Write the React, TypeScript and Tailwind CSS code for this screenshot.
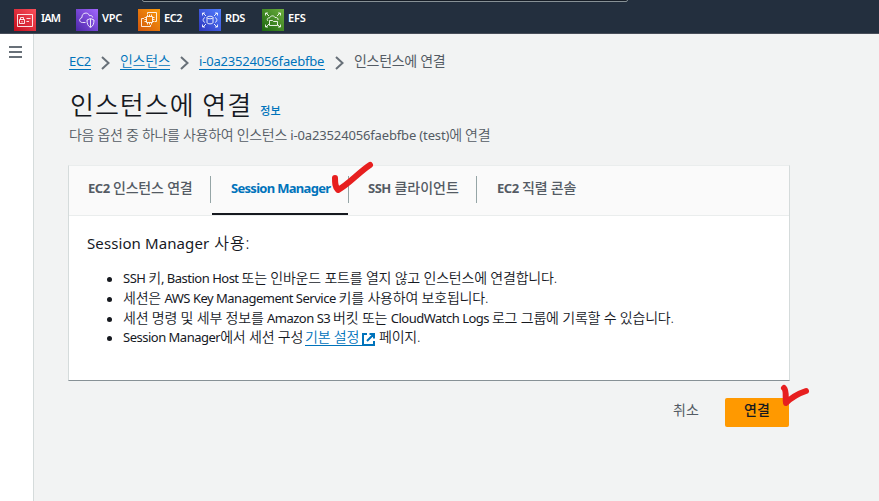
import React from 'react';

const FONT = 'font-["Noto_Sans","Noto_Sans_CJK_KR",sans-serif]';

function En({ className = 'text-[13px] font-normal tracking-[-0.5px]', children }: { className?: string; children: React.ReactNode }) {
  return <span className={className}>{children}</span>;
}

function Chevron() {
  return (
    <svg className="mt-[7px] block h-[14px] w-[9px] shrink-0" viewBox="0 0 9 14" fill="none" stroke="#687078" strokeWidth="2">
      <path d="M1 1l6.5 6L1 13" />
    </svg>
  );
}

function Item({ children }: { children: React.ReactNode }) {
  return (
    <li className="flex h-[20px]">
      <i className="mr-[11px] mt-[8px] h-[5px] w-[5px] rounded-full bg-[#16191f]" />
      <div className="whitespace-pre">{children}</div>
    </li>
  );
}

const corners = 'M3.5 6.500V4H6M4 4l3 3M16 4h2.500v2.500M18 4l-3 3M3.500 15.500V18H6M4 18l3-3M18.500 15.500V18H16M18 18l-3-3';

function ServiceIcon({ name }: { name: string }) {
  return (
    <svg className="block h-[22px] w-[22px] shrink-0" viewBox="0 0 22 22" fill="none" stroke="#fff" strokeWidth="1" strokeOpacity="0.85">
      <defs>
        <linearGradient id={'g' + name} x1="0" y1="1" x2="1" y2="0">
          <stop offset="0" stopColor={{ IAM: '#c40d1d', VPC: '#4d27a8', EC2: '#d2560d', RDS: '#2e36bd', EFS: '#1b660f' }[name]} />
          <stop offset="1" stopColor={{ IAM: '#fa505b', VPC: '#a166ff', EC2: '#fa9a0a', RDS: '#527fff', EFS: '#6cae3e' }[name]} />
        </linearGradient>
      </defs>
      <rect width="22" height="22" fill={`url(#g${name})`} stroke="none" />
      {name === 'IAM' && (
        <g>
          <path d="M3.500 5.500h15v12h-15z" />
          <path d="M5.500 10.500h5v4h-5zM6.500 10.500V8.500h3v2M12.500 9.500h4M12.500 12.500h2.500M8 12v1.500" />
        </g>
      )}
      {name === 'VPC' && (
        <g>
          <path d="M9.500 13.500H6.500C3 13.500 2.700 9.500 6 8.500 5.500 3.500 12 2.500 13.500 6.700c2-.7 3 .5 3.200 1.800" />
          <path d="M14.500 9.500l3.500 1.500c0 4-1 6-3.500 7.500-2.500-1.500-3.500-3.500-3.500-7.500zM14.500 10v8" />
        </g>
      )}
      {name === 'EC2' && (
        <g>
          <path d="M8.500 7.500h6v6h-6zM9.500 7.500v-2M11.500 7.500v-2M13.500 7.500v-2M9.500 13.500v2M11.500 13.500v2M13.500 13.500v2M8.500 8.500h-2M8.500 10.500h-2M8.500 12.500h-2M14.500 8.500h2M14.500 10.500h2M14.500 12.500h2" />
          <path d="M9.500 5V3.500h9v9h-1.500M6 9.500H3.500v8h9V16" />
        </g>
      )}
      {name === 'RDS' && (
        <g>
          <path d={corners} />
          <ellipse cx="11" cy="8.500" rx="3" ry="1.300" />
          <path d="M8 8.500v5c0 1.800 6 1.800 6 0v-5M6 8.500c-2.500 1-2.500 4 0 5M16 8.500c2.500 1 2.500 4 0 5" />
        </g>
      )}
      {name === 'EFS' && (
        <g>
          <path d={corners} />
          <path d="M7.500 16.500v-5h3l1 1h4v4zM6 12c-1.500-1.500-.5-3.500 1.500-3 .8-2.500 4.500-3 5.500-.5 2-.5 3.500 1 3 2.500" />
        </g>
      )}
    </svg>
  );
}

const link = 'border-b border-[#0073bb] text-[#0073bb]';

export default function App() {
  return (
    <div className={`${FONT} flex h-[501px] w-[879px] flex-col overflow-hidden bg-[#f2f3f3] text-[14px] text-[#16191f]`}>
      <header className="relative flex h-[34px] shrink-0 border-b border-[#474d59] bg-[#232f3e] pl-[14px] pt-[9px] text-[11px] font-semibold leading-[18px] text-white">
        <div className="absolute left-[142px] top-[-6px] h-[8px] w-[486px] rounded-[2px] border border-[#879196] bg-[#161d26]" />
        <div className="flex w-[62px] gap-[5px]"><ServiceIcon name="IAM" /><span className="tracking-[-0.8px]">IAM</span></div>
        <div className="flex w-[62px] gap-[4px]"><ServiceIcon name="VPC" /><span className="tracking-[-0.2px]">VPC</span></div>
        <div className="flex w-[61px] gap-[4px]"><ServiceIcon name="EC2" /><span className="tracking-[-0.5px]">EC2</span></div>
        <div className="flex w-[63px] gap-[4px]"><ServiceIcon name="RDS" /><span className="tracking-[-0.4px]">RDS</span></div>
        <div className="flex gap-[4px]"><ServiceIcon name="EFS" /><span className="tracking-[-0.2px]">EFS</span></div>
      </header>
      <div className="flex min-h-0 flex-1">
        <aside className="w-[34px] shrink-0 border-r border-[#d5dbdb] bg-white pl-[9px] pt-[12px]">
          <div className="flex w-[13px] flex-col gap-[3px]">
            <i className="h-[2px] bg-[#687078]" /><i className="h-[2px] bg-[#687078]" /><i className="h-[2px] bg-[#687078]" />
          </div>
        </aside>
        <main className="flex flex-1 flex-col whitespace-nowrap pl-[34px]">
          <nav className="flex h-[36px] pl-[1px] pt-[15px] leading-[23px]">
            <a className={`${link} mr-[10px] h-[21px] w-[22px]`}><En className="text-[13px] tracking-[-0.3px]">EC2</En></a>
            <Chevron />
            <a className={`${link} ml-[10px] mr-[10px] h-[21px] w-[50px] tracking-[-0.3px] font-[350]`}>인스턴스</a>
            <Chevron />
            <a className={`${link} ml-[10px] mr-[10px] h-[21px] w-[126px]`}><En className="text-[13px] tracking-[-0.18px]">i-0a23524056faebfbe</En></a>
            <Chevron />
            <span className="ml-[10px] tracking-[-0.3px] text-[#545b64]">인스턴스에 연결</span>
          </nav>
          <div className="flex h-[54px] items-baseline pl-[2px] pt-[13px]">
            <h1 className="text-[26px] font-[350] leading-[44px] tracking-[1px]">인스턴스에 연결</h1>
            <a className="ml-[8px] text-[11px] font-medium leading-[20px] tracking-[0.3px] text-[#0073bb]">정보</a>
          </div>
          <p className="h-[41px] pl-[1px] font-[350] leading-[22px] tracking-[-0.3px] text-[#545b64]">다음 옵션 중 하나를 사용하여 인스턴스 <En className="text-[13px] font-normal tracking-[-0.15px]">i-0a23524056faebfbe (test)</En>에 연결</p>
          <section className="h-[216px] w-[722px] border border-[#d5dbdb] border-b-[#879196] border-t-[#eaeded] bg-white">
            <div className="flex h-[50px] border-b border-[#eaeded] bg-[#fafafa] font-medium leading-[20px] text-[#545b64]">
              <div className="w-[143px] pl-[19px] pt-[12px] tracking-[-0.2px]"><En className="text-[13px] font-bold tracking-[-0.5px]">EC2</En> 인스턴스 연결</div>
              <div className="relative w-[136px] border-b-2 border-[#16191f] pl-[19px] pt-[12px] font-bold text-[#0073bb]">
                <i className="absolute left-[-2px] top-[10px] h-[27px] w-px bg-[#95a5a6]" />
                <i className="absolute right-[-1px] top-[10px] h-[27px] w-px bg-[#95a5a6]" />
                <En className="text-[13px] tracking-[-0.7px]">Session Manager</En>
                <svg className="absolute left-[117px] top-[-7px] h-[38px] w-[48px]" viewBox="0 0 48 38" fill="none" stroke="#e71f1f" strokeWidth="6" strokeLinecap="round" strokeLinejoin="round">
                  <path d="M6 19c0 5 0 9 3 12C20 25 29 14 41 6" />
                </svg>
              </div>
              <div className="w-[129px] pl-[20px] pt-[12px]"><En className="text-[13px] font-bold tracking-[-0.5px]">SSH</En> 클라이언트</div>
              <div className="relative pl-[20px] pt-[12px] tracking-[-0.2px]">
                <i className="absolute left-[-1px] top-[10px] h-[27px] w-px bg-[#95a5a6]" />
                <En className="text-[13px] font-bold tracking-[-0.5px]">EC2</En> 직렬 콘솔
              </div>
            </div>
            <h2 className="h-[53px] pl-[18px] pt-[15px] text-[16px] font-[350] leading-[24px] tracking-[0.9px]"><En className="text-[15px] font-normal tracking-[0.1px]">Session Manager</En> 사용:</h2>
            <ul className="flex flex-col pl-[38px] font-[350] leading-[18px] tracking-[-0.2px]">
              <Item><En>SSH </En>키<En>, Bastion Host </En>또는 인바운드 포트를 열지 않고 인스턴스에 연결합니다.</Item>
              <Item>세션은 <En>AWS Key Management Service </En>키를 사용하여 보호됩니다.</Item>
              <Item>세션 명령 및 세부 정보를 <En>Amazon S3 </En>버킷 또는 <En>CloudWatch Logs </En>로그 그룹에 기록할 수 있습니다.</Item>
              <li className="flex h-[20px]">
                <i className="mr-[11px] mt-[7px] h-[5px] w-[5px] rounded-full bg-[#16191f]" />
                <span className="w-[182px] leading-[16px]"><En>Session Manager</En>에서 세션 구성</span>
                <a className={`${link} flex h-[17px] w-[70px] justify-between leading-[16px]`}>
                  기본 설정
                  <svg className="mt-[4px] block h-[13px] w-[13px] shrink-0" viewBox="0 0 13 13" fill="none" stroke="#0073bb" strokeWidth="2"><path d="M5 1H1v11h11V8M7.500 1H12v4.500M12 1L5 8" /></svg>
                </a>
                <span className="ml-[4px] leading-[16px]">페이지.</span>
              </li>
            </ul>
          </section>
          <div className="flex pt-[17px] leading-[24px]">
            <button className="ml-[605px] h-[24px] w-[26px] text-[#545b64]">취소</button>
            <button className="relative ml-[26px] h-[29px] w-[64px] rounded-[2px] bg-[#ff9900] pb-[5px] font-medium text-[#16191f]">연결
              <svg className="absolute left-[52px] top-[-15px] h-[26px] w-[36px]" viewBox="0 0 36 26" fill="none" stroke="#e71f1f" strokeWidth="6" strokeLinecap="round" strokeLinejoin="round">
                <path d="M7 5c3 3 1 11 2 15C14 15 20 11 29 8" />
              </svg>
            </button>
          </div>
        </main>
      </div>
    </div>
  );
}
